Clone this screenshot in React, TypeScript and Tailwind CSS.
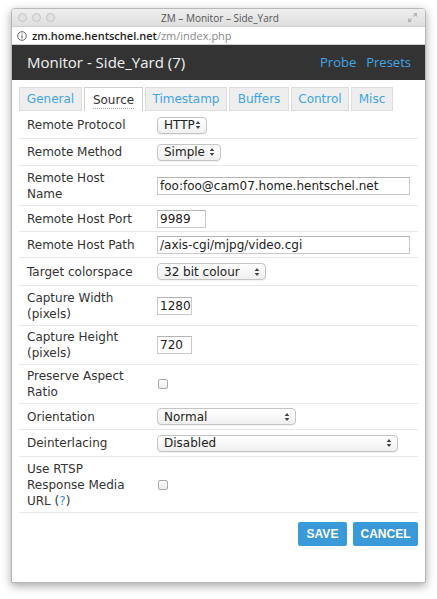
import React from "react";

const dv = { fontFamily: '"DejaVu Sans", Verdana, sans-serif' };
const os = { fontFamily: '"Open Sans", "DejaVu Sans", sans-serif' };

function Arrows() {
  return (
    <svg width="6" height="10" viewBox="0 0 6 10" className="shrink-0">
      <path d="M3 1 L5.3 4 L0.7 4 Z" fill="#444" />
      <path d="M3 9 L5.3 6 L0.7 6 Z" fill="#444" />
    </svg>
  );
}

function Select({ w, text }: { w: string; text: string }) {
  return (
    <div
      className={`${w} h-[17px] flex items-center justify-between pl-[6px] pr-[5px] border border-[#c4c4c4] rounded-[4px] bg-gradient-to-b from-white to-[#f0f0f0] text-[12px] leading-none text-[#222] shadow-[0_1px_0_rgba(0,0,0,0.05)]`}
      style={dv}
    >
      <span>{text}</span>
      <Arrows />
    </div>
  );
}

function Input({ w, text }: { w: string; text: string }) {
  return (
    <div
      className={`${w} h-[18px] flex items-center px-[2px] border border-[#c9c9c9] border-t-[#b5b5b5] bg-white text-[12px] leading-none text-[#222]`}
      style={dv}
    >
      {text}
    </div>
  );
}

function Check() {
  return (
    <div className="ml-[1px] w-[10px] h-[10px] rounded-[2px] border border-[#a9a9a9] bg-gradient-to-b from-white to-[#ececec]" />
  );
}

function Row({ h, label, children }: { h: string; label: React.ReactNode; children: React.ReactNode }) {
  return (
    <div className={`${h} flex items-center border-b border-[#e8e8e8]`}>
      <div className="w-[138px] shrink-0 pl-[8px] pr-[20px] text-[12px] leading-[16px] text-[#333]" style={dv}>
        {label}
      </div>
      <div className="flex items-center">{children}</div>
    </div>
  );
}

const tabs = [
  { name: "General", w: "w-[63px]" },
  { name: "Source", w: "w-[59px]", active: true },
  { name: "Timestamp", w: "w-[82px]" },
  { name: "Buffers", w: "w-[60px]" },
  { name: "Control", w: "w-[58px]" },
  { name: "Misc", w: "w-[42px]" },
];

export default function App() {
  return (
    <div className="w-[437px] h-[599px] bg-white pt-[8px] pl-[11px]">
      <div className="w-[415px] h-[575px] flex flex-col bg-white border border-[#b8b8b8] shadow-[0_3px_10px_rgba(0,0,0,0.35)] rounded-t-[4px] overflow-hidden">
        {/* title bar */}
        <div className="h-[17px] shrink-0 flex items-center px-[6px] bg-gradient-to-b from-[#efefef] to-[#dedede]">
          <div className="flex gap-[5px]">
            <div className="w-[9px] h-[9px] rounded-full border border-[#c3c3c3] bg-[#e2e2e2]" />
            <div className="w-[9px] h-[9px] rounded-full border border-[#c3c3c3] bg-[#e2e2e2]" />
            <div className="w-[9px] h-[9px] rounded-full border border-[#c3c3c3] bg-[#e2e2e2]" />
          </div>
          <div className="flex-1 text-center text-[10px] leading-none text-[#555] pr-[22px]" style={os}>
            ZM – Monitor – Side_Yard
          </div>
          <svg width="11" height="11" viewBox="0 0 11 11" className="mr-[1px]">
            <path d="M6 1 L10 1 L10 5 Z M5 10 L1 10 L1 6 Z" fill="#b3b3b3" />
            <path d="M9.5 1.5 L6.5 4.5 M1.5 9.5 L4.5 6.5" stroke="#b3b3b3" strokeWidth="1.1" />
          </svg>
        </div>
        {/* address bar */}
        <div className="h-[19px] shrink-0 flex items-center px-[5px] bg-white border-y border-[#cfcfcf] text-[11px] leading-none" style={os}>
          <svg width="10" height="10" viewBox="0 0 10 10" className="mr-[5px]">
            <circle cx="5" cy="5" r="4.3" fill="none" stroke="#555" strokeWidth="0.9" />
            <rect x="4.5" y="4.2" width="1" height="3.3" fill="#555" />
            <rect x="4.5" y="2.4" width="1" height="1" fill="#555" />
          </svg>
          <span className="text-[#1e1e1e] font-semibold">zm.home.hentschel.net</span>
          <span className="text-[#8a8a8a]">/zm/index.php</span>
        </div>
        {/* header */}
        <div className="h-[35px] shrink-0 flex items-center justify-between pl-[15px] pr-[14px] bg-[#333333]" style={os}>
          <span className="text-[15px] text-[#f2f2f2]">Monitor - Side_Yard (7)</span>
          <div className="flex gap-[10px] text-[13px] text-[#3ea8ea]">
            <span>Probe</span>
            <span>Presets</span>
          </div>
        </div>
        {/* body */}
        <div className="flex-1 px-[7px] pt-[7px]">
          <div className="flex gap-[2px] h-[24px]">
            {tabs.map((t) => (
              <div
                key={t.name}
                className={
                  t.active
                    ? `${t.w} flex items-center justify-center border border-[#cfcfcf] border-b-0 bg-white text-[12px] text-[#333]`
                    : `${t.w} flex items-center justify-center border border-[#dddddd] bg-[#eeeeee] text-[12px] text-[#3ea5e6]`
                }
                style={dv}
              >
                <span className={t.active ? "border-b border-dotted border-[#aaa] leading-[15px] mt-[2px]" : ""}>{t.name}</span>
              </div>
            ))}
          </div>
          <div className="flex flex-col pt-[1px]">
            <Row h="h-[27px]" label="Remote Protocol">
              <Select w="w-[50px]" text="HTTP" />
            </Row>
            <Row h="h-[27px]" label="Remote Method">
              <Select w="w-[64px]" text="Simple" />
            </Row>
            <Row h="h-[40px]" label="Remote Host Name">
              <Input w="w-[253px]" text="foo:foo@cam07.home.hentschel.net" />
            </Row>
            <Row h="h-[26px]" label="Remote Host Port">
              <Input w="w-[49px]" text="9989" />
            </Row>
            <Row h="h-[26px]" label="Remote Host Path">
              <Input w="w-[253px]" text="/axis-cgi/mjpg/video.cgi" />
            </Row>
            <Row h="h-[28px]" label="Target colorspace">
              <Select w="w-[109px]" text="32 bit colour" />
            </Row>
            <Row h="h-[40px]" label="Capture Width (pixels)">
              <Input w="w-[35px]" text="1280" />
            </Row>
            <Row h="h-[39px]" label="Capture Height (pixels)">
              <Input w="w-[35px]" text="720" />
            </Row>
            <Row h="h-[39px]" label="Preserve Aspect Ratio">
              <Check />
            </Row>
            <Row h="h-[26px]" label="Orientation">
              <Select w="w-[139px]" text="Normal" />
            </Row>
            <Row h="h-[27px]" label="Deinterlacing">
              <Select w="w-[241px]" text="Disabled" />
            </Row>
            <Row
              h="h-[56px]"
              label={
                <>
                  Use RTSP Response Media URL (<span className="text-[#3a8fd8]">?</span>)
                </>
              }
            >
              <Check />
            </Row>
          </div>
          <div className="flex justify-end gap-[6px] pt-[9px]">
            <button className="w-[49px] h-[24px] rounded-[2px] bg-[#3a9ad9] text-white text-[12px] font-bold" style={{ fontFamily: '"Liberation Sans", Arial, sans-serif' }}>
              SAVE
            </button>
            <button className="w-[65px] h-[24px] rounded-[2px] bg-[#3a9ad9] text-white text-[12px] font-bold" style={{ fontFamily: '"Liberation Sans", Arial, sans-serif' }}>
              CANCEL
            </button>
          </div>
        </div>
      </div>
    </div>
  );
}
